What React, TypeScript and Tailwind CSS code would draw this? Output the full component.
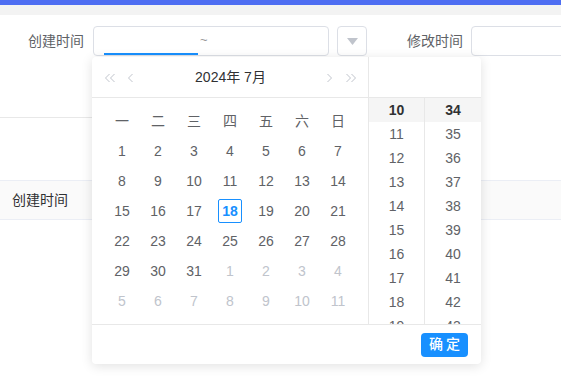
import React from 'react';

const font = { fontFamily: '"Liberation Sans", "Noto Sans CJK SC", sans-serif' };

const weekDays = ['一', '二', '三', '四', '五', '六', '日'];

// July 2024 starts on Monday
const dates: { d: number; muted: boolean }[] = [
  ...Array.from({ length: 31 }, (_, i) => ({ d: i + 1, muted: false })),
  ...Array.from({ length: 11 }, (_, i) => ({ d: i + 1, muted: true })),
];

const hours = [10, 11, 12, 13, 14, 15, 16, 17, 18, 19];
const minutes = [34, 35, 36, 37, 38, 39, 40, 41, 42, 43];

const Chevron: React.FC<{ dir: 'left' | 'right'; double?: boolean }> = ({ dir, double }) => {
  const pts = (x: number) =>
    dir === 'left' ? `${x + 4},1 ${x},5 ${x + 4},9` : `${x},1 ${x + 4},5 ${x},9`;
  return (
    <svg width={double ? 11 : 6} height="10" viewBox={double ? '0 0 11 10' : '0 0 6 10'} fill="none" stroke="#c0c4cc" strokeWidth="1">
      <polyline points={pts(0.5)} />
      {double && <polyline points={pts(5.5)} />}
    </svg>
  );
};

const DatePopup: React.FC = () => (
  <div className="absolute left-[92px] top-[57px] w-[389px] bg-white rounded shadow-[0_2px_12px_rgba(0,0,0,0.12)] flex flex-col">
    <div className="flex">
      {/* Calendar */}
      <div className="w-[277px] shrink-0 border-r border-[#e8e8e8] flex flex-col">
        <div className="h-[41px] border-b border-[#e8e8e8] flex items-center pl-[13px] pr-[11px]">
          <div className="flex items-center gap-[12px] mt-[1px]">
            <Chevron dir="left" double />
            <Chevron dir="left" />
          </div>
          <div className="flex-1 text-center text-[14px] text-[#303133] mt-[1px]">2024年 7月</div>
          <div className="flex items-center gap-[13px] mt-[1px]">
            <Chevron dir="right" />
            <Chevron dir="right" double />
          </div>
        </div>
        <div className="grid grid-cols-[repeat(7,36px)] auto-rows-[30px] w-[252px] mx-auto pt-[8px] pb-[8px] text-[14px]">
          {weekDays.map((w) => (
            <div key={w} className="flex items-center justify-center text-[#606266]">{w}</div>
          ))}
          {dates.map((x, i) => (
            <div key={i} className="flex items-center justify-center">
              {x.d === 18 && !x.muted ? (
                <span className="w-[24px] h-[24px] flex items-center justify-center border border-[#1890ff] rounded-[2px] text-[#1890ff] font-bold">18</span>
              ) : (
                <span className={x.muted ? 'text-[#c0c4cc]' : 'text-[#606266]'}>{x.d}</span>
              )}
            </div>
          ))}
        </div>
      </div>
      {/* Time */}
      <div className="flex flex-col">
        <div className="h-[41px] border-b border-[#e8e8e8]" />
        <div className="flex h-[226px] overflow-hidden">
          <div className="w-[56px] border-r border-[#e8e8e8]">
            {hours.map((h, i) => (
              <div key={h} className={`h-[24px] flex items-center justify-center text-[14px] ${i === 0 ? 'bg-[#f5f5f5] font-bold text-[#303133]' : 'text-[#606266]'}`}>{h}</div>
            ))}
          </div>
          <div className="w-[56px]">
            {minutes.map((m, i) => (
              <div key={m} className={`h-[24px] flex items-center justify-center text-[14px] ${i === 0 ? 'bg-[#f5f5f5] font-bold text-[#303133]' : 'text-[#606266]'}`}>{m}</div>
            ))}
          </div>
        </div>
      </div>
    </div>
    <div className="border-t border-[#e8e8e8] h-[40px] flex items-center justify-end pr-[13px]">
      <button className="h-[24px] w-[47px] rounded-[4px] bg-[#1890ff] text-white text-[14px] tracking-[3px] pl-[3px] font-medium">确定</button>
    </div>
  </div>
);

export default function App() {
  return (
    <div className="relative w-[561px] h-[385px] bg-white overflow-hidden" style={font}>
      <div className="h-[5px] bg-[#4e6ef2]" />
      <div className="h-[10px] bg-[#f3f3f3]" />

      {/* Filter row */}
      <div className="flex items-center mt-[11px] h-[30px] text-[14px] text-[#606266] whitespace-nowrap">
        <div className="w-[84px] shrink-0 text-right">创建时间</div>
        <div className="relative ml-[9px] w-[236px] shrink-0 h-[30px] border border-[#dcdfe6] rounded-[4px] flex items-center">
          <span className="ml-[106px] text-[#999] text-[13px] -mt-[3px]">~</span>
          <div className="absolute left-[10px] bottom-0 w-[94px] h-[2px] bg-[#1890ff]" />
        </div>
        <div className="ml-[8px] w-[30px] shrink-0 h-[30px] border border-[#dcdfe6] rounded-[4px] flex items-center justify-center">
          <svg width="11" height="7" viewBox="0 0 11 7"><polygon points="0,0 11,0 5.5,7" fill="#c0c4cc" /></svg>
        </div>
        <div className="ml-[40px] w-[57px] shrink-0">修改时间</div>
        <div className="ml-[7px] w-[200px] shrink-0 h-[30px] border border-[#dcdfe6] rounded-[4px]" />
      </div>

      <div className="mt-[61px] w-[300px] border-b border-[#e8e8e8]" />

      <div className="mt-[62px] h-[40px] border-y border-[#ebeef5] bg-[#fafafa] flex items-center pl-[12px] text-[14px] text-[#303133]">
        创建时间
      </div>

      <DatePopup />
    </div>
  );
}
